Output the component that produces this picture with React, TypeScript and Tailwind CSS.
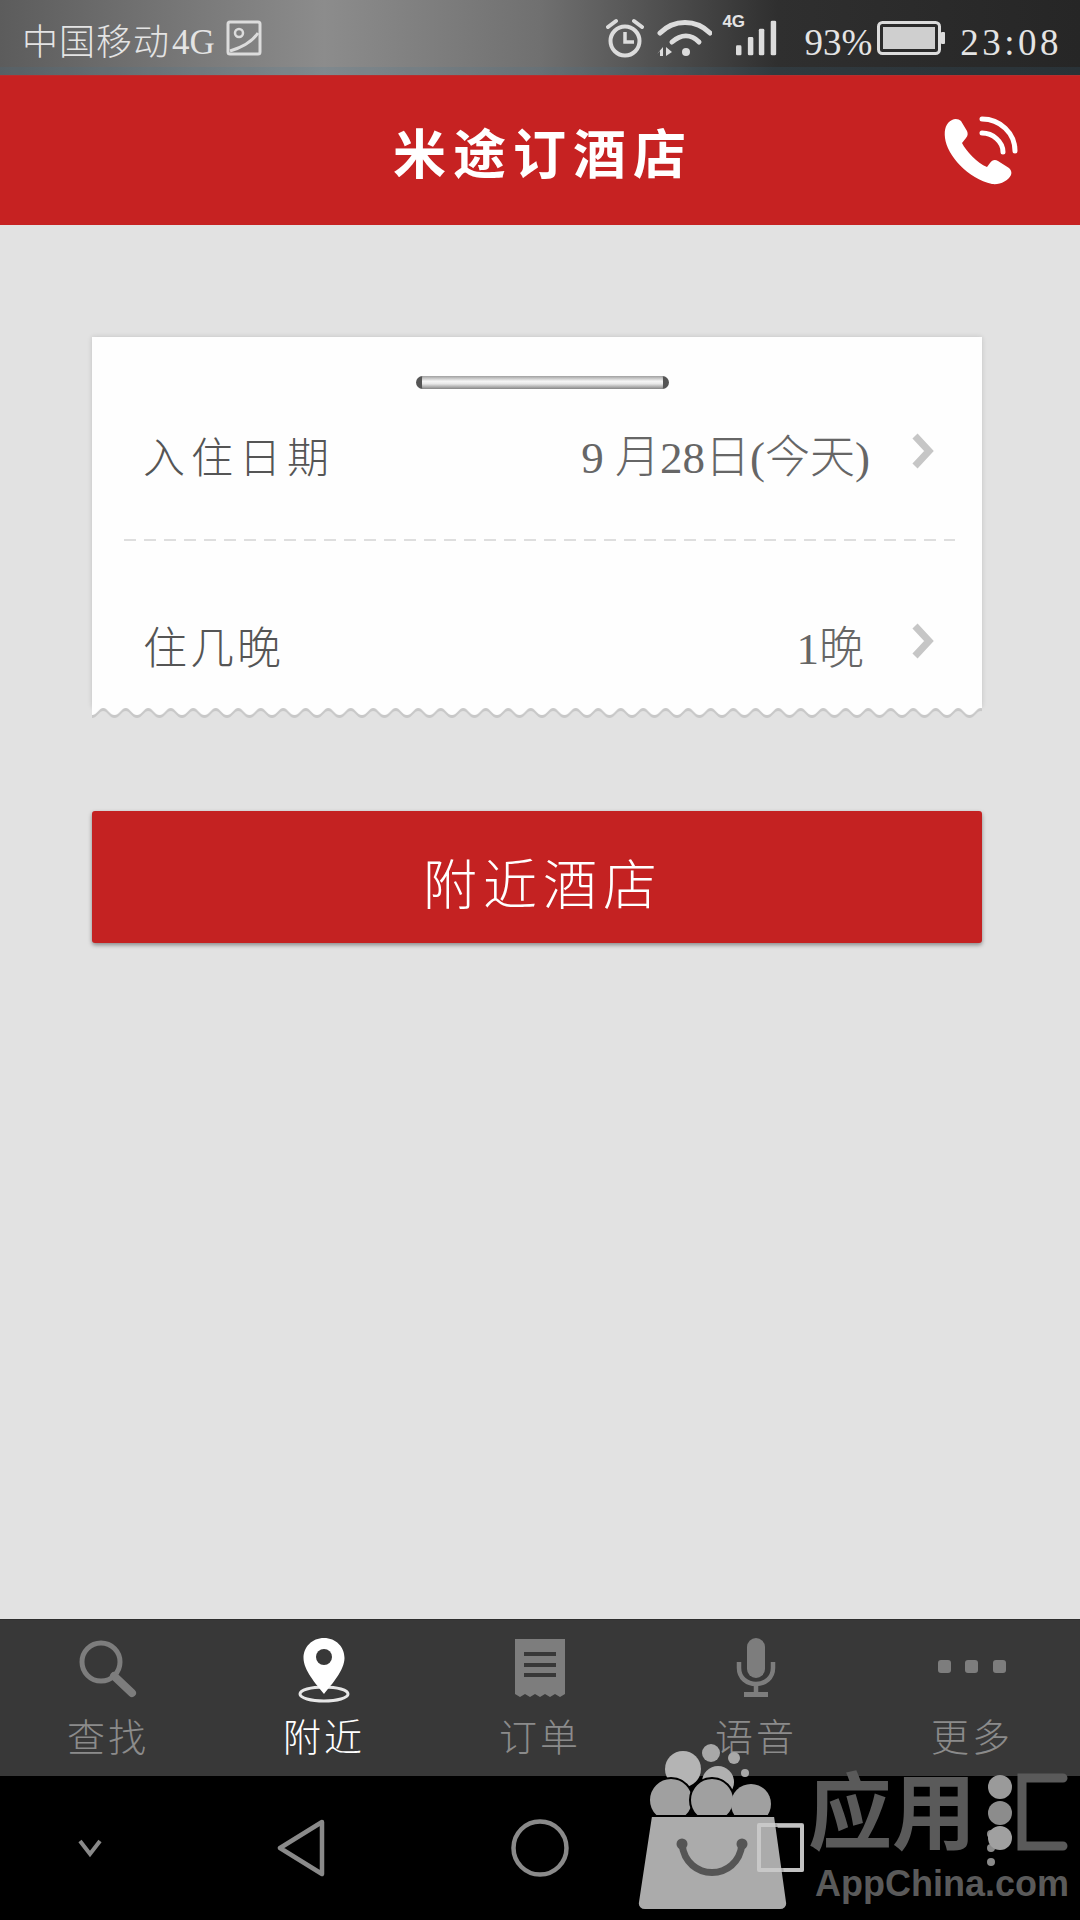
import React from "react";

const font = "font-['Liberation_Serif','Noto_Sans_CJK_SC',serif]";

const Chevron = () => (
  <svg width="24" height="36" viewBox="0 0 24 36" className="shrink-0 mb-[14px]">
    <path d="M5 3l14 15L5 33" fill="none" stroke="#c6c6c6" strokeWidth="7" strokeLinejoin="miter" />
  </svg>
);

const StatusBar = () => (
  <div className={`${font} relative h-[75px] flex items-center pl-[22px] pr-[18px] text-[#e4e4e4] bg-[linear-gradient(90deg,#5c5c5c_0%,#8c8c8c_30%,#707070_50%,#2f2f2f_72%,#262626_100%)]`}>
    <div className="absolute inset-x-0 bottom-0 h-[8px] bg-[#3f7a9a]/15" />
    <span className="mt-[10px] text-[36px] leading-none tracking-[1px] font-light">中国移动</span>
    <span className="mt-[10px] ml-[2px] text-[35px] leading-none font-light">4G</span>
    <svg width="36" height="36" viewBox="0 0 36 36" className="ml-[11px]">
      <rect x="2" y="2" width="32" height="32" rx="2" fill="none" stroke="#dcdcdc" strokeWidth="3" />
      <circle cx="13" cy="13" r="4" fill="none" stroke="#dcdcdc" strokeWidth="2.5" />
      <path d="M4 31C14 28 26 22 32 13" fill="none" stroke="#dcdcdc" strokeWidth="3" />
    </svg>
    <svg width="38" height="40" viewBox="0 0 38 40" className="ml-auto">
      <circle cx="19" cy="23" r="14.5" fill="none" stroke="#dcdcdc" strokeWidth="4" />
      <path d="M19 14v10h9" fill="none" stroke="#dcdcdc" strokeWidth="3.5" />
      <path d="M2 9l8-6M36 9l-8-6" stroke="#dcdcdc" strokeWidth="4" strokeLinecap="round" />
    </svg>
    <svg width="56" height="40" viewBox="0 0 56 40" className="ml-[12px]">
      <path d="M4 15C18 1 40 1 54 15" fill="none" stroke="#dcdcdc" strokeWidth="5" strokeLinecap="round" />
      <path d="M16 24C25 16 35 16 43 24" fill="none" stroke="#dcdcdc" strokeWidth="5" strokeLinecap="round" />
      <circle cx="30" cy="34" r="4" fill="#dcdcdc" />
      <path d="M7 29v9H4v-5l-3 3zM10 29l6 5-6 4z" fill="#dcdcdc" />
    </svg>
    <div className="relative w-[42px] h-[56px] ml-[24px] mr-[26px]">
      <span className="absolute left-[-14px] top-[3px] text-[17px] leading-none font-bold font-['Liberation_Sans',sans-serif]">4G</span>
      <svg width="42" height="38" viewBox="0 0 46 38" className="absolute left-0 top-[9px]">
        <rect x="0" y="27" width="6" height="11" rx="1.5" fill="#dcdcdc" />
        <rect x="13" y="18" width="6" height="20" rx="1.5" fill="#dcdcdc" />
        <rect x="25" y="9" width="6" height="29" rx="1.5" fill="#dcdcdc" />
        <rect x="38" y="0" width="6" height="38" rx="1.5" fill="#dcdcdc" />
      </svg>
    </div>
    <span className="mt-[10px] text-[37px] leading-none font-light">93%</span>
    <svg width="68" height="34" viewBox="0 0 68 34" className="ml-[5px]">
      <rect x="1.5" y="1.5" width="61" height="31" rx="4" fill="none" stroke="#dcdcdc" strokeWidth="3" />
      <rect x="6" y="6" width="52" height="22" fill="#cfcfcf" />
      <rect x="64" y="11" width="4" height="12" rx="1" fill="#dcdcdc" />
    </svg>
    <span className="mt-[10px] text-[37px] leading-none font-light tracking-[3.5px] ml-[15px]">23:08</span>
  </div>
);

const Header = () => (
  <div className="relative h-[150px] bg-[#c62222] flex items-center justify-center border-t border-[#b82e2e]">
    <span className="font-['Noto_Sans_CJK_SC',serif] font-bold text-white text-[53px] leading-none tracking-[7px] mt-[2px] ml-[6px]">米途订酒店</span>
    <svg width="100" height="90" viewBox="0 0 100 90" className="absolute right-[50px] top-[29px]">
      <path d="M22 15C16 18 14 24 15 33C17 50 38 74 62 79C70 80 78 76 81 70C82 67 81 65 79 63L68 56C65 54 62 55 60 58L57 62C47 58 36 46 32 38L36 33C38 31 38 28 37 26L31 16C29 14 25 13 22 15z" fill="#ffffff" />
      <path d="M52 14C70 14 85 28 85 46M52 28C63 28 73 37 73 47" fill="none" stroke="#ffffff" strokeWidth="5" strokeLinecap="round" />
    </svg>
  </div>
);

const Row = ({ label, value, labelClass, valueClass, className }: { label: string; value: string; labelClass: string; valueClass: string; className: string }) => (
  <div className={`flex items-center pl-[51px] pr-[48px] text-[#555555] ${className}`}>
    <span className={labelClass}>{label}</span>
    <span className={`ml-auto text-[45px] leading-[50px] text-[#666666] font-light ${valueClass}`}>{value}</span>
    <Chevron />
  </div>
);

const Card = () => (
  <div className={`${font} relative bg-[#fefefe] h-[370px] shadow-[0_0_5px_rgba(0,0,0,0.14)]`}>
    <div className="pt-[39px] pl-[10px] flex justify-center">
      <div className="w-[253px] h-[13px] rounded-full border-x-[6px] border-[#555555] blur-[0.6px] bg-[linear-gradient(180deg,#a0a0a0_0%,#f6f6f6_40%,#e8e8e8_60%,#858585_100%)]" />
    </div>
    <Row label="入住日期" value="9 月28日(今天)" labelClass="text-[42px] leading-[50px] tracking-[6px] font-light mt-[2px]" valueClass="mr-[40px]" className="pt-[43px]" />
    <div className="ml-[32px] mr-[27px] mt-[55px] h-[2px] bg-[repeating-linear-gradient(90deg,#dedede_0,#dedede_12px,transparent_12px,transparent_20px)]" />
    <Row label="住几晚" value="1晚" labelClass="text-[44px] leading-[50px] tracking-[3px] font-light mt-[4px]" valueClass="mr-[46px] mt-[2px]" className="pt-[80px]" />
    <svg width="890" height="14" viewBox="0 0 890 14" className="absolute left-0 top-[370px]">
      <defs>
        <pattern id="zig" width="22.5" height="14" patternUnits="userSpaceOnUse">
          <path d="M0 8C5 8 7 1 11.25 1C15.5 1 17.5 8 22.5 8V0H0z" fill="#fefefe" />
        </pattern>
        <pattern id="zigshade" width="22.5" height="14" patternUnits="userSpaceOnUse">
          <path d="M0 11C5 11 7 4 11.25 4C15.5 4 17.5 11 22.5 11V0H0z" fill="#c8c8c8" />
        </pattern>
      </defs>
      <rect width="890" height="14" fill="url(#zigshade)" />
      <rect width="890" height="14" fill="url(#zig)" />
    </svg>
  </div>
);

const tabs = [
  {
    label: "查找",
    active: false,
    icon: (
      <svg width="60" height="60" viewBox="0 0 60 60">
        <circle cx="23" cy="24" r="19" fill="none" stroke="#7d7d7d" strokeWidth="5" />
        <path d="M36 38l18 17" stroke="#7d7d7d" strokeWidth="8" strokeLinecap="round" />
      </svg>
    ),
  },
  {
    label: "附近",
    active: true,
    icon: (
      <svg width="52" height="66" viewBox="0 0 52 66">
        <ellipse cx="26" cy="56" rx="24" ry="7" fill="none" stroke="#e6e6e6" strokeWidth="3" />
        <path d="M26 0C14 0 5.5 9 5.5 20C5.5 32 18 46 26 56C34 46 46.5 32 46.5 20C46.5 9 38 0 26 0z" fill="#ffffff" />
        <circle cx="26" cy="19" r="8" fill="#383838" />
      </svg>
    ),
  },
  {
    label: "订单",
    active: false,
    icon: (
      <svg width="52" height="60" viewBox="0 0 52 60">
        <path d="M1 1h50v55l-5 3-5-3-5 3-5-3-5 3-5-3-5 3-5-3-5 3-5-3z" fill="#7d7d7d" />
        <path d="M10 16h32M10 27h32M10 37h32" stroke="#383838" strokeWidth="4" />
      </svg>
    ),
  },
  {
    label: "语音",
    active: false,
    icon: (
      <svg width="40" height="60" viewBox="0 0 40 60">
        <rect x="11" y="0" width="18" height="40" rx="9" fill="#7d7d7d" />
        <path d="M3 24v6c0 10 8 16 17 16s17-6 17-16v-6" fill="none" stroke="#7d7d7d" strokeWidth="4.5" />
        <path d="M20 46v10" stroke="#7d7d7d" strokeWidth="4.5" />
        <rect x="8" y="54" width="24" height="5" fill="#7d7d7d" />
      </svg>
    ),
  },
  {
    label: "更多",
    active: false,
    icon: (
      <svg width="68" height="60" viewBox="0 0 68 60">
        <rect x="0" y="22" width="13" height="13" rx="3" fill="#7d7d7d" />
        <rect x="27" y="22" width="13" height="13" rx="3" fill="#7d7d7d" />
        <rect x="55" y="22" width="13" height="13" rx="3" fill="#7d7d7d" />
      </svg>
    ),
  },
];

const TabBar = () => (
  <div className={`${font} h-[157px] bg-[#383838] border-t border-[#2e2e2e] grid grid-cols-5`}>
    {tabs.map((t) => (
      <div key={t.label} className="flex flex-col items-center pt-[18px]">
        <div className="h-[66px] flex items-start justify-center">{t.icon}</div>
        <span className={`mt-[11px] text-[38px] leading-[46px] tracking-[3px] font-light ${t.active ? "text-white" : "text-[#8b8b8b]"}`}>{t.label}</span>
      </div>
    ))}
  </div>
);

const NavBar = () => (
  <div className="h-[144px] bg-black grid grid-cols-5 items-center">
    <div className="flex justify-center -translate-x-[18px]">
      <svg width="26" height="20" viewBox="0 0 26 20">
        <path d="M3 3l10 13L23 3" fill="none" stroke="#8a8a8a" strokeWidth="4" />
      </svg>
    </div>
    <div className="flex justify-center -translate-x-[23px]">
      <svg width="50" height="58" viewBox="0 0 50 58">
        <path d="M46 3L4 29l42 26z" fill="none" stroke="#8a8a8a" strokeWidth="4.5" strokeLinejoin="round" />
      </svg>
    </div>
    <div className="flex justify-center">
      <svg width="58" height="58" viewBox="0 0 58 58">
        <circle cx="29" cy="29" r="26.5" fill="none" stroke="#8a8a8a" strokeWidth="4.5" />
      </svg>
    </div>
    <div className="flex justify-center translate-x-[24px]">
      <div className="w-[48px] h-[48px] border-[4px] border-[#8a8a8a] rounded-[2px]" />
    </div>
    <div className="flex flex-col items-center gap-[6px] translate-x-[19px]">
      <div className="w-[8px] h-[8px] rounded-full bg-[#8a8a8a]" />
      <div className="w-[8px] h-[8px] rounded-full bg-[#8a8a8a]" />
      <div className="w-[8px] h-[8px] rounded-full bg-[#8a8a8a]" />
    </div>
  </div>
);

// AppChina watermark sits on top of the tab bar and nav bar
const Watermark = () => (
  <div className="absolute left-[630px] top-[1735px] w-[450px] h-[185px] pointer-events-none">
    <svg width="170" height="185" viewBox="630 1735 170 185" className="absolute left-0 top-0">
      <circle cx="683" cy="1769" r="18" fill="#b4b4b4" />
      <circle cx="711" cy="1753" r="9" fill="#a8a8a8" />
      <circle cx="734" cy="1758" r="6" fill="#a8a8a8" />
      <circle cx="718" cy="1782" r="16" fill="#b0b0b0" />
      <circle cx="745" cy="1773" r="4" fill="#a8a8a8" />
      <circle cx="671" cy="1800" r="22" fill="#a0a0a0" stroke="#000" strokeWidth="2" />
      <circle cx="712" cy="1800" r="22" fill="#a0a0a0" stroke="#000" strokeWidth="2" />
      <circle cx="751" cy="1804" r="20" fill="#a0a0a0" />
      <path d="M651 1816h124l12 86c1 5-3 8-7 8H645c-4 0-8-3-7-8z" fill="#ababab" stroke="#000" strokeWidth="2" />
      <path d="M682 1844c4 38 56 38 60 0" fill="none" stroke="#555" strokeWidth="7" />
      <circle cx="682" cy="1844" r="5.5" fill="#555" />
      <circle cx="742" cy="1844" r="5.5" fill="#555" />
    </svg>
    <div className="absolute left-[127px] top-[88px] w-[47px] h-[49px] border-[4px] border-[#d0d0d0]/80 rounded-[2px]" />
    <span className="absolute left-[178px] top-[22px] font-['Noto_Sans_CJK_SC',sans-serif] font-bold text-[84px] leading-[100px] text-[#5a5a5a] whitespace-nowrap">应用</span>
    <svg width="90" height="90" viewBox="0 0 90 90" className="absolute left-[348px] top-[35px]">
      <circle cx="22" cy="17" r="12" fill="#9a9a9a" />
      <circle cx="22" cy="43" r="12" fill="#8c8c8c" />
      <circle cx="22" cy="68" r="12" fill="#a0a0a0" />
      <path d="M85 8H44v68h41" fill="none" stroke="#5a5a5a" strokeWidth="9" strokeLinecap="round" />
    </svg>
    <span className="absolute left-[185px] top-[127px] font-['Liberation_Sans',sans-serif] font-bold text-[36px] leading-[44px] text-[#5a5a5a] whitespace-nowrap">AppChina.com</span>
  </div>
);

export default function App() {
  return (
    <div className="relative w-[1080px] h-[1920px] overflow-hidden flex flex-col bg-[#e2e2e2]">
      <StatusBar />
      <Header />
      <div className="flex-1 pl-[92px] pr-[98px] pt-[112px]">
        <Card />
        <button className={`${font} mt-[104px] w-full h-[132px] rounded-[3px] bg-[#c42222] text-white text-[54px] tracking-[6px] font-light pl-[12px] pt-[20px] shadow-[0_2px_4px_rgba(0,0,0,0.4)]`}>
          附近酒店
        </button>
      </div>
      <TabBar />
      <NavBar />
      <Watermark />
    </div>
  );
}
